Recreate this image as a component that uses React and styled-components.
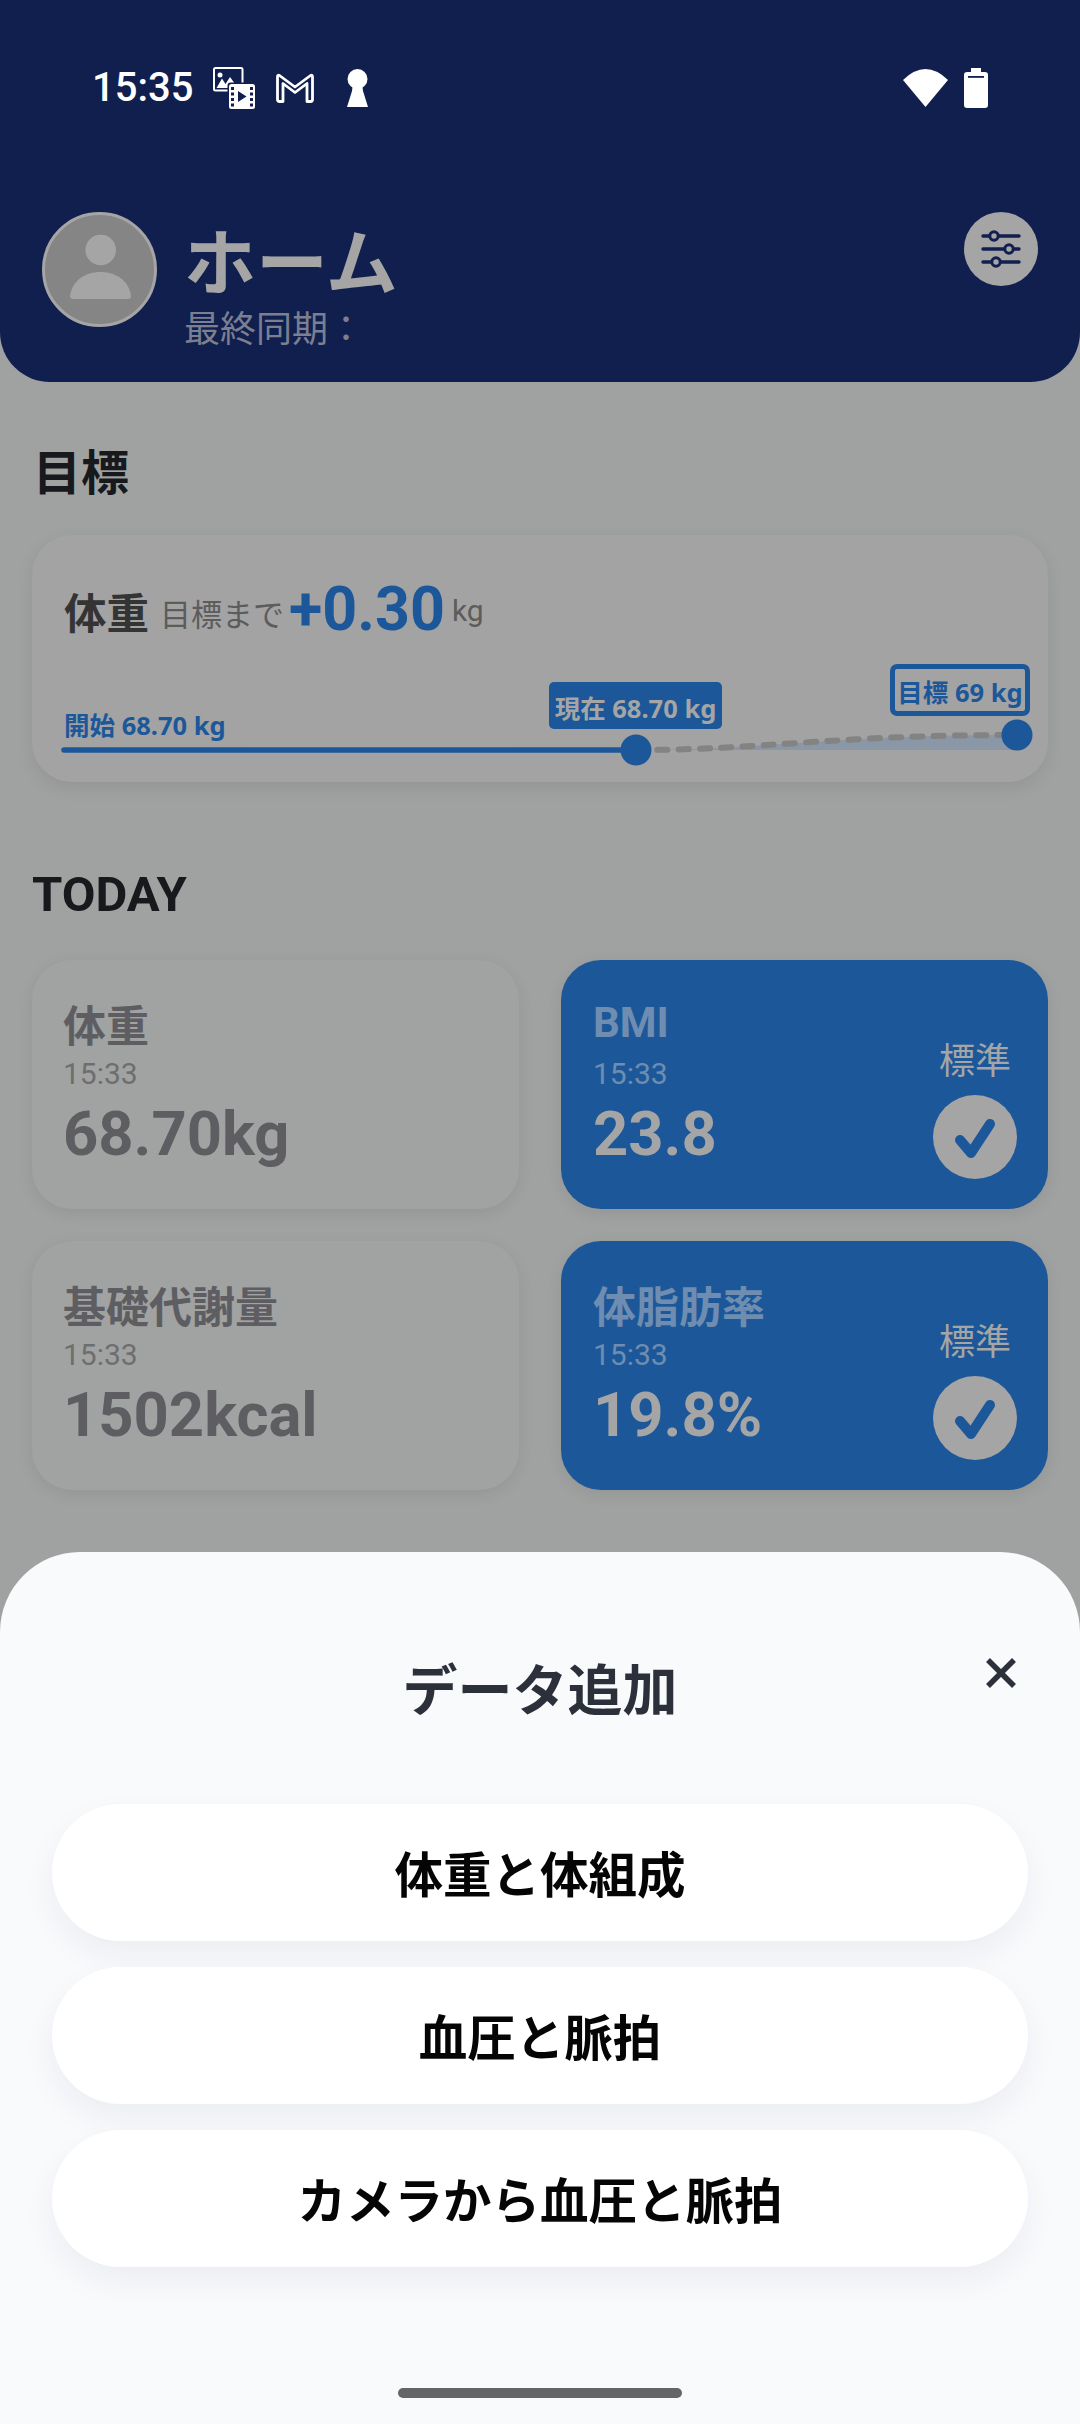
import styled, { createGlobalStyle } from 'styled-components'

const CJK = '"Noto Sans CJK JP", "Noto Sans", sans-serif'
const LATIN = 'Roboto, "Noto Sans CJK JP", sans-serif'
const NAVY = '#111f4e'
const BLUE = '#1c5899'
const DIM_WHITE = '#a5a5a5'

const GlobalStyle = createGlobalStyle`
  html, body { margin: 0; padding: 0; background: #a0a2a1; }
  * { box-sizing: border-box; }
`

const Screen = styled.div`
  position: relative;
  width: 1080px;
  height: 2424px;
  overflow: hidden;
  background: #a0a2a1;
  font-family: ${CJK};
`
const Header = styled.header`
  height: 382px;
  padding-top: 60px;
  background: ${NAVY};
  border-radius: 0 0 50px 50px;
`
const StatusBar = styled.div`
  display: flex;
  align-items: center;
  height: 56px;
  padding: 0 92px;
  color: #fff;
`
const Clock = styled.span`
  font: 500 40px/1 Roboto, sans-serif;
  margin-right: 20px;
`
const StatusIcons = styled.div`
  display: flex;
  align-items: center;
  gap: ${p => p.$gap}px;
  margin-left: ${p => (p.$end ? 'auto' : '0')};
  svg { display: block; }
`
const KeyholeSlot = styled.div`
  margin-left: 12px;
`
const Profile = styled.div`
  display: flex;
  align-items: flex-start;
  padding: 0 42px;
  margin-top: 96px;
`
const Avatar = styled.div`
  width: 115px;
  height: 115px;
  flex: none;
  border-radius: 50%;
  border: 3px solid ${DIM_WHITE};
  background: #858585;
  svg { display: block; width: 100%; height: 100%; }
`
const ProfileText = styled.div`
  display: flex;
  flex-direction: column;
  margin: 10px 0 0 27px;
`
const ProfileName = styled.div`
  font-size: 72px;
  line-height: 1;
  font-weight: 700;
  color: ${DIM_WHITE};
`
const LastSync = styled.div`
  margin-top: 14px;
  font-size: 36px;
  line-height: 1;
  color: #7b7f8f;
`
const SettingsButton = styled.div`
  display: flex;
  align-items: center;
  justify-content: center;
  width: 74px;
  height: 74px;
  margin-left: auto;
  border-radius: 50%;
  background: ${DIM_WHITE};
`
const Main = styled.main`
  padding: 0 32px;
`
const SectionTitle = styled.h2`
  margin: ${p => p.$top}px 0 ${p => p.$bottom}px ${p => p.$left}px;
  font-family: ${p => (p.$latin ? LATIN : CJK)};
  font-size: ${p => (p.$latin ? 49 : 48)}px;
  line-height: 1;
  font-weight: 700;
  color: #18191d;
`
const GoalCard = styled.section`
  height: 247px;
  padding-top: 42px;
  border-radius: 40px;
  background: #a3a3a3;
  box-shadow: 0 6px 18px rgba(0, 0, 0, 0.08);
`
const GoalHead = styled.div`
  display: flex;
  align-items: flex-start;
  height: 63px;
  padding: 0 32px;
`
const GoalName = styled.span`
  margin: 13px 11px 0 0;
  font-size: 42.5px;
  line-height: 1;
  font-weight: 700;
  color: #343434;
`
const GoalHint = styled.span`
  margin: 20px 5px 0 0;
  font-size: 31px;
  line-height: 1;
  color: #5c5c5c;
`
const GoalDelta = styled.span`
  margin: 2px 7px 0 0;
  font: 700 61px/1 Roboto, sans-serif;
  color: ${BLUE};
`
const GoalUnit = styled.span`
  margin-top: 19px;
  font: 400 30px/1 Roboto, sans-serif;
  color: #5c5c5c;
`
const Chart = styled.div`
  position: relative;
  height: 127px;
  margin-top: 15px;
  svg { display: block; }
`
const ChartLabel = styled.span`
  position: absolute;
  left: ${p => p.$x}px;
  top: ${p => p.$y}px;
  font-family: "Noto Sans", "Noto Sans CJK JP", sans-serif;
  font-size: 25.5px;
  line-height: 1;
  font-weight: 700;
  color: ${BLUE};
  white-space: nowrap;
`
const ChartTag = styled(ChartLabel)`
  display: flex;
  align-items: center;
  justify-content: center;
  width: ${p => p.$w}px;
  height: ${p => p.$h}px;
  padding-top: 6px;
  border-radius: ${p => (p.$outlined ? 7 : 5)}px;
  border: ${p => (p.$outlined ? `5px solid ${BLUE}` : 'none')};
  background: ${p => (p.$outlined ? 'transparent' : BLUE)};
  color: ${p => (p.$outlined ? BLUE : DIM_WHITE)};
`
const MetricGrid = styled.div`
  display: grid;
  grid-template-columns: 487px 487px;
  grid-auto-rows: 249px;
  column-gap: 42px;
  row-gap: 32px;
`
const MetricCard = styled.div`
  position: relative;
  display: flex;
  flex-direction: column;
  padding: 42px 32px 0 ${p => (p.$accent ? 32 : 31)}px;
  border-radius: 40px;
  background: ${p => (p.$accent ? BLUE : '#a1a3a2')};
  box-shadow: 0 4px 16px rgba(0, 0, 0, 0.08);
`
const MetricName = styled.div`
  font-family: ${p => (p.$latin ? LATIN : CJK)};
  font-size: ${p => (p.$latin ? 42 : 43)}px;
  line-height: 1;
  font-weight: 700;
  color: ${p => (p.$accent ? '#6e8db0' : '#5e5e62')};
`
const MetricTime = styled.div`
  margin-top: ${p => (p.$latin ? 15 : 14)}px;
  font: 400 30px/1 Roboto, sans-serif;
  color: ${p => (p.$accent ? '#6e8db0' : '#6e6e70')};
`
const MetricValue = styled.div`
  margin-top: 15px;
  font: 700 61.5px/1 Roboto, sans-serif;
  color: ${p => (p.$accent ? DIM_WHITE : '#5e5e62')};
`
const MetricStatus = styled.div`
  position: absolute;
  right: 31px;
  top: 80px;
  display: flex;
  flex-direction: column;
  align-items: center;
  gap: 19px;
  font-size: 36px;
  line-height: 1;
  color: ${DIM_WHITE};
`
const CheckBadge = styled.div`
  width: 84px;
  height: 84px;
  border-radius: 50%;
  background: ${DIM_WHITE};
  svg { display: block; }
`
const Sheet = styled.aside`
  position: absolute;
  left: 0;
  right: 0;
  bottom: 0;
  height: 872px;
  padding: 107px 52px 0;
  display: flex;
  flex-direction: column;
  background: #f9fafc;
  border-radius: 80px 80px 0 0;
`
const SheetTitle = styled.h3`
  margin: 0 0 90px;
  font-size: 55px;
  line-height: 1;
  font-weight: 700;
  text-align: center;
  color: #2b303b;
`
const CloseButton = styled.div`
  position: absolute;
  top: 105px;
  right: 63px;
  width: 32px;
  height: 32px;
  svg { display: block; }
`
const SheetActions = styled.div`
  display: flex;
  flex-direction: column;
  gap: 26px;
`
const SheetAction = styled.div`
  display: flex;
  align-items: center;
  justify-content: center;
  height: 137px;
  border-radius: 69px;
  background: #fff;
  box-shadow: 0 14px 32px rgba(30, 40, 70, 0.06);
  font-size: 48.5px;
  line-height: 1;
  font-weight: 700;
  color: #050505;
`
const HomeBar = styled.div`
  align-self: center;
  width: 284px;
  height: 10px;
  margin-top: 121px;
  border-radius: 5px;
  background: #636567;
`

const MediaIcon = () => (
  <svg width="42" height="42" viewBox="0 0 42 42">
    <rect x="1" y="1" width="28.5" height="22.5" rx="1.5" fill="none" stroke="#fff" strokeWidth="2" />
    <circle cx="7" cy="8" r="2.5" fill="#fff" />
    <path d="M3.5 21 L9 11.5 L12.5 17 L17 10 L25 21 Z" fill="#fff" />
    <rect x="14.5" y="15.5" width="29" height="28" rx="3" fill={NAVY} />
    <rect x="16" y="17" width="26" height="25" rx="2.5" fill="#fff" />
    <g fill={NAVY}>
      <rect x="18" y="20" width="3" height="3" />
      <rect x="18" y="25.5" width="3" height="3" />
      <rect x="18" y="31" width="3" height="3" />
      <rect x="18" y="36.5" width="3" height="3" />
      <rect x="37" y="20" width="3" height="3" />
      <rect x="37" y="25.5" width="3" height="3" />
      <rect x="37" y="31" width="3" height="3" />
      <rect x="37" y="36.5" width="3" height="3" />
      <path d="M25 24 L33.5 29.5 L25 35 Z" />
    </g>
  </svg>
)
const MailIcon = () => (
  <svg width="38" height="30" viewBox="0 0 38 30">
    <path
      d="M3.5 2.5 L19 14 L34.5 2.5 Q36.5 1.5 36.5 4 L36.5 26.5 Q36.5 28.5 34.5 28.5 L31 28.5 L31 10.5 L19 19.5 L7 10.5 L7 28.5 L3.5 28.5 Q1.5 28.5 1.5 26.5 L1.5 4 Q1.5 1.5 3.5 2.5 Z"
      fill="none"
      stroke="#fff"
      strokeWidth="2.8"
      strokeLinejoin="round"
    />
  </svg>
)
const KeyholeIcon = () => (
  <svg width="21" height="38" viewBox="0 0 21 38">
    <circle cx="10.5" cy="10" r="10" fill="#fff" />
    <path d="M6 14 H15 L16 22 L21 38 H0 L5 22 Z" fill="#fff" />
  </svg>
)
const WifiIcon = () => (
  <svg width="45" height="38" viewBox="0 0 45 38">
    <path d="M0 11 Q22.5 -11 45 11 L22.5 38 Z" fill="#fff" />
  </svg>
)
const BatteryIcon = () => (
  <svg width="24" height="40" viewBox="0 0 24 40">
    <rect x="7" y="0" width="10" height="5" fill="#fff" />
    <rect x="0" y="4" width="24" height="36" rx="3" fill="#fff" />
    <rect x="4" y="8" width="16" height="1.8" fill={NAVY} />
  </svg>
)
const PersonIcon = () => (
  <svg viewBox="3 3 109 109">
    <circle cx="58.7" cy="38" r="15.3" fill={DIM_WHITE} />
    <path d="M28 84 C30 68 44 60 58.5 60 C73 60 87 68 89 84 Q89 87 86 87 H31 Q28 87 28 84 Z" fill={DIM_WHITE} />
  </svg>
)
const SlidersIcon = () => (
  <svg width="40" height="40" viewBox="0 0 40 40" fill={DIM_WHITE} stroke={NAVY} strokeLinecap="round">
    <path d="M2 7 H38 M2 20 H38 M2 33 H38" strokeWidth="3.4" fill="none" />
    <circle cx="13" cy="7" r="4.2" strokeWidth="3" />
    <circle cx="28" cy="20" r="4.2" strokeWidth="3" />
    <circle cx="15" cy="33" r="4.2" strokeWidth="3" />
  </svg>
)
const CheckIcon = () => (
  <svg width="84" height="84" viewBox="0 0 84 84">
    <path d="M27 45 L38 58 L57 29" fill="none" stroke={BLUE} strokeWidth="10" strokeLinecap="round" strokeLinejoin="round" />
  </svg>
)
const CloseIcon = () => (
  <svg width="32" height="32" viewBox="0 0 32 32">
    <path d="M3 3 L29 29 M29 3 L3 29" stroke="#2b303b" strokeWidth="5.5" fill="none" />
  </svg>
)
const GoalLine = () => (
  <svg width="1016" height="127" viewBox="0 0 1016 127">
    <path d="M604 95 C730 95 800 80 985 80 V95 Z" fill="#8a97a6" />
    <path d="M32 95 H604" stroke={BLUE} strokeWidth="5.5" strokeLinecap="round" fill="none" />
    <path d="M604 95 C730 95 800 80 985 80" stroke="#838383" strokeWidth="6" strokeDasharray="10 11.3" strokeLinecap="round" fill="none" />
    <circle cx="604" cy="95" r="15.5" fill={BLUE} />
    <circle cx="985" cy="80" r="15.5" fill={BLUE} />
  </svg>
)

const metrics = [
  { name: '体重', time: '15:33', value: '68.70kg' },
  { name: 'BMI', time: '15:33', value: '23.8', accent: true, latin: true },
  { name: '基礎代謝量', time: '15:33', value: '1502kcal' },
  { name: '体脂肪率', time: '15:33', value: '19.8%', accent: true },
]

const actions = ['体重と体組成', '血圧と脈拍', 'カメラから血圧と脈拍']

export default function App() {
  return (
    <Screen>
      <GlobalStyle />
      <Header>
        <StatusBar>
          <Clock>15:35</Clock>
          <StatusIcons $gap={21}>
            <MediaIcon />
            <MailIcon />
            <KeyholeSlot>
              <KeyholeIcon />
            </KeyholeSlot>
          </StatusIcons>
          <StatusIcons $gap={16} $end>
            <WifiIcon />
            <BatteryIcon />
          </StatusIcons>
        </StatusBar>
        <Profile>
          <Avatar>
            <PersonIcon />
          </Avatar>
          <ProfileText>
            <ProfileName>ホーム</ProfileName>
            <LastSync>最終同期：</LastSync>
          </ProfileText>
          <SettingsButton>
            <SlidersIcon />
          </SettingsButton>
        </Profile>
      </Header>
      <Main>
        <SectionTitle $top={63} $bottom={42} $left={1}>目標</SectionTitle>
        <GoalCard>
          <GoalHead>
            <GoalName>体重</GoalName>
            <GoalHint>目標まで</GoalHint>
            <GoalDelta>+0.30</GoalDelta>
            <GoalUnit>kg</GoalUnit>
          </GoalHead>
          <Chart>
            <GoalLine />
            <ChartLabel $x={32} $y={58}>開始 68.70 kg</ChartLabel>
            <ChartTag $x={517} $y={27} $w={173} $h={47}>現在 68.70 kg</ChartTag>
            <ChartTag $x={858} $y={9} $w={140} $h={52} $outlined>目標 69 kg</ChartTag>
          </Chart>
        </GoalCard>
        <SectionTitle $latin $top={88} $bottom={41} $left={0}>TODAY</SectionTitle>
        <MetricGrid>
          {metrics.map(m => (
            <MetricCard key={m.name} $accent={m.accent}>
              <MetricName $accent={m.accent} $latin={m.latin}>{m.name}</MetricName>
              <MetricTime $accent={m.accent} $latin={m.latin}>{m.time}</MetricTime>
              <MetricValue $accent={m.accent}>{m.value}</MetricValue>
              {m.accent && (
                <MetricStatus>
                  標準
                  <CheckBadge>
                    <CheckIcon />
                  </CheckBadge>
                </MetricStatus>
              )}
            </MetricCard>
          ))}
        </MetricGrid>
      </Main>
      <Sheet>
        <SheetTitle>データ追加</SheetTitle>
        <CloseButton>
          <CloseIcon />
        </CloseButton>
        <SheetActions>
          {actions.map(a => (
            <SheetAction key={a}>{a}</SheetAction>
          ))}
        </SheetActions>
        <HomeBar />
      </Sheet>
    </Screen>
  )
}
